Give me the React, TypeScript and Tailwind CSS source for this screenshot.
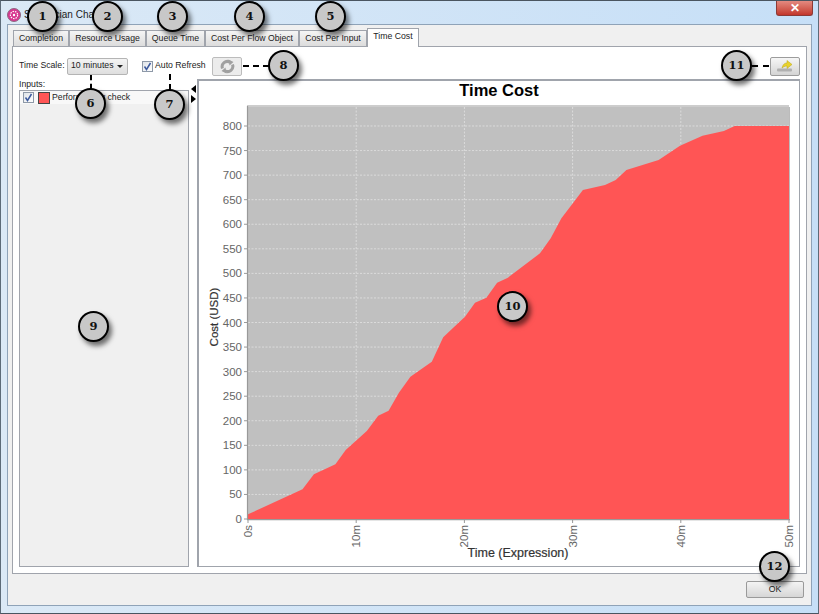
const tabs = [
  { label: "Completion", width: "w-[56px]" },
  { label: "Resource Usage", width: "w-[77px]" },
  { label: "Queue Time", width: "w-[59px]" },
  { label: "Cost Per Flow Object", width: "w-[94px]" },
  { label: "Cost Per Input", width: "w-[68px]" },
];

const area =
  "248,514.3 302.5,489.3 313.9,474.3 335.4,464.3 345.7,450 366.8,431 378.2,415.7 388.6,410.7 398.9,392.7 410.4,376.7 431.8,361.7 443.2,337.3 454.3,326.7 465,316.7 475,302.7 486.4,297.7 497.1,282.7 507.9,277.7 540,253.3 550.7,238.3 561.4,218.3 572.1,204.3 582.9,190 605,185 615.7,180 626.4,170 658.6,160 680,145.7 702.5,135.7 723.9,131 734.6,126 789,126 789,519 248,519";

const yTicks = Array.from({ length: 17 }, (_, i) => i * 50);
const xTicks = ["0s", "10m", "20m", "30m", "40m", "50m"];

const Badge = ({ n, className }: { n: number; className: string }) => (
  <div
    className={`absolute z-20 flex h-[31px] w-[31px] items-center justify-center rounded-full border-2 border-black bg-[#c8c8c8] text-[11.5px] font-bold text-[#111] shadow-[3px_4px_5px_rgba(0,0,0,0.55)] [font-family:'DejaVu_Serif',serif] ${className}`}
  >
    {n}
  </div>
);

const Dash = ({ className }: { className: string }) => (
  <div className={`absolute z-10 border-black ${className}`} />
);

const Check = () => (
  <span className="flex h-[11px] w-[11px] shrink-0 items-center justify-center border border-[#8e99a8] bg-gradient-to-br from-[#dfe3e8] to-white">
    <svg width="9" height="9" viewBox="0 0 9 9">
      <path d="M1.5 4.5 L3.5 7.5 L7.5 1" fill="none" stroke="#3d5a9e" strokeWidth="1.5" />
    </svg>
  </span>
);

const Chart = () => (
  <svg viewBox="199 102 600 464" className="block h-[464px] w-[600px]">
    <rect x="248" y="107" width="541" height="412" fill="#c0c0c0" />
    <polyline points="247,106 789,106" stroke="#9a9a9a" fill="none" />
    {yTicks.map((v) => {
      const y = 519 - (v * 393) / 800;
      return (
        <g key={v}>
          {v > 0 && (
            <line x1="248" x2="789" y1={y} y2={y} stroke="#e2e2e2" strokeWidth="0.8" strokeDasharray="2 1.5" />
          )}
          <line x1="244" x2="247" y1={y} y2={y} stroke="#999" />
          <text x="242" y={y + 4} textAnchor="end" fontSize="11.5" fill="#666" fontFamily="Liberation Sans">
            {v}
          </text>
        </g>
      );
    })}
    {xTicks.map((t, i) => {
      const x = 248 + i * 108.2;
      return (
        <g key={t}>
          {i > 0 && i < 5 && (
            <line x1={x} x2={x} y1="107" y2="519" stroke="#e2e2e2" strokeWidth="0.8" strokeDasharray="2 1.5" />
          )}
          <line x1={x} x2={x} y1="520" y2="523" stroke="#999" />
          <text
            transform={`translate(${x + 4} 525) rotate(-90)`}
            textAnchor="end"
            fontSize="11.5"
            fill="#666"
            fontFamily="Liberation Sans"
          >
            {t}
          </text>
        </g>
      );
    })}
    <polygon points={area} fill="#ff5555" />
    <line x1="247.5" x2="247.5" y1="106" y2="520" stroke="#999" strokeWidth="1.2" />
    <line x1="247" x2="790" y1="519.7" y2="519.7" stroke="#999" strokeWidth="1.2" />
    <line x1="789.5" x2="789.5" y1="107" y2="519" stroke="#bbb" />
    <text x="518" y="557" textAnchor="middle" fontSize="12.5" fill="#333" fontFamily="Liberation Sans" stroke="#333" strokeWidth="0.2">
      Time (Expression)
    </text>
    <text
      transform="translate(218 317) rotate(-90)"
      textAnchor="middle"
      fontSize="11.5"
      fill="#333"
      fontFamily="Liberation Sans"
      stroke="#333"
      strokeWidth="0.2"
    >
      Cost (USD)
    </text>
  </svg>
);

export default function App() {
  return (
    <div className="relative flex h-[614px] w-[819px] flex-col overflow-hidden border border-x-[#5d6b78] border-y-[#4a5560] bg-gradient-to-r from-[#dbe9f6] to-[#c6dff7] text-[8.7px] text-[#222] [font-family:'Liberation_Sans',sans-serif]">
      <div className="flex h-[23px] shrink-0 items-center pl-[6px] pt-[4px]">
        <svg width="14" height="14" viewBox="0 0 14 14">
          <circle cx="7" cy="7" r="6.5" fill="#d8368f" stroke="#8c6b82" />
          <circle cx="7" cy="7" r="3.6" fill="none" stroke="#fff" strokeWidth="1.2" strokeDasharray="1.5 1" />
          <circle cx="7" cy="7" r="1.2" fill="#fff" />
        </svg>
        <span className="ml-[3px] text-[10px] text-[#1c1c1c]">Simulacian Chart</span>
      </div>

      <div className="absolute right-[5px] top-0 flex h-[15px] w-[37px] items-center justify-center rounded-b-[3px] border border-t-0 border-[#8c3a36] bg-gradient-to-b from-[#e38a80] to-[#c2352b] text-[12px] font-bold leading-none text-white">
        ✕
      </div>

      <div className="mx-[6px] mb-[7px] flex flex-1 flex-col border border-[#8fa3b8] bg-[#f0f0f0] px-[4px]">
        <div className="flex h-[21px] shrink-0 items-end pl-[1px]">
          {tabs.map((t) => (
            <div
              key={t.label}
              className={`flex h-[16px] items-center justify-center border border-b-0 border-[#a0a4ac] bg-gradient-to-b from-[#f5f5f5] to-[#dcdcdc] whitespace-nowrap ${t.width}`}
            >
              {t.label}
            </div>
          ))}
          <div className="relative z-[1] -mb-[1px] flex h-[19px] w-[52px] items-center justify-center border border-b-0 border-[#a0a4ac] bg-white pb-[2px] whitespace-nowrap">
            Time Cost
          </div>
        </div>

        <div className="flex h-[528px] shrink-0 flex-col border border-[#a0a4ac] bg-white px-[6px]">
          <div className="flex h-[32px] shrink-0 items-center pt-[6px]">
            <span className="w-[48px] whitespace-nowrap">Time Scale:</span>
            <div className="flex h-[17px] w-[61px] items-center justify-between rounded-[2px] border border-[#b4b4b4] bg-gradient-to-b from-[#f4f4f4] to-[#dedede] pl-[3px] pr-[4px]">
              <span className="whitespace-nowrap">10 minutes</span>
              <span className="h-0 w-0 border-x-[3px] border-t-[3px] border-x-transparent border-t-[#222]" />
            </div>
            <div className="ml-[14px]">
              <Check />
            </div>
            <span className="ml-[2px] w-[51px] whitespace-nowrap">Auto Refresh</span>
            <div className="ml-[6px] flex h-[19px] w-[30px] items-center justify-center rounded-[2px] border border-[#bcbcbc] bg-[#ececec]">
              <svg width="15" height="15" viewBox="0 0 15 15" fill="none" stroke="#a0a0a0" strokeWidth="3">
                <path d="M2.5 9.5 A5.2 5.2 0 0 1 10 3.2" />
                <path d="M12.5 5.5 A5.2 5.2 0 0 1 5 11.8" />
                <path d="M8.5 0.5 L13.5 3 L9.5 6.5 Z" fill="#a0a0a0" stroke="none" />
                <path d="M6.5 14.5 L1.5 12 L5.5 8.5 Z" fill="#a0a0a0" stroke="none" />
              </svg>
            </div>
            <div className="ml-auto flex h-[19px] w-[30px] items-center justify-center rounded-[2px] border border-[#9c9c9c] bg-gradient-to-b from-[#f6f6f6] to-[#d4d4d4]">
              <svg width="20" height="14" viewBox="0 0 20 14">
                <rect x="2" y="9.5" width="15" height="3" rx="1" fill="#b0b0b0" />
                <path d="M7 9 C8 5 10 4 12 4 L12 1.5 L17 5.5 L12 9.5 L12 7 C10.5 7 9 7.5 7 9 Z" fill="#e8d22c" stroke="#b9a51a" strokeWidth="0.5" />
              </svg>
            </div>
          </div>

          <div className="flex flex-1 pb-[6px]">
            <div className="flex w-[170px] shrink-0 flex-col">
              <div className="h-[11px] leading-[11px]">Inputs:</div>
              <div className="flex-1 border border-[#a0a4ac] bg-[#f0f0f0]">
                <div className="flex h-[13px] items-center bg-[#f8f8f8] pl-[3px]">
                  <Check />
                  <span className="ml-[4px] h-[12px] w-[12px] border border-[#444] bg-[#ff5555]" />
                  <span className="ml-[2px]">Perform Body check</span>
                </div>
              </div>
            </div>
            <div className="flex w-[8px] shrink-0 flex-col items-center gap-[2px] pt-[6px]">
              <span className="h-0 w-0 border-y-[4px] border-r-[5px] border-y-transparent border-r-black" />
              <span className="h-0 w-0 border-y-[4px] border-l-[5px] border-y-transparent border-l-black" />
            </div>
            <div className="flex-1 border border-l-2 border-t-2 border-[#a0a4ac] bg-white">
              <div className="h-[21px] text-center text-[16.5px] font-bold leading-[18px] text-black">
                Time Cost
              </div>
              <Chart />
            </div>
          </div>
        </div>

        <div className="flex flex-1 items-center justify-end pr-[3px]">
          <div className="flex h-[17px] w-[58px] items-center justify-center rounded-[2px] border border-[#9a9a9a] bg-gradient-to-b from-[#f4f4f4] to-[#d6d6d6]">
            OK
          </div>
        </div>
      </div>

      <Badge n={1} className="left-[26px] top-0" />
      <Badge n={2} className="left-[91px] top-0" />
      <Badge n={3} className="left-[156px] top-0" />
      <Badge n={4} className="left-[233px] top-0" />
      <Badge n={5} className="left-[314px] top-0" />
      <Badge n={6} className="left-[74px] top-[87px]" />
      <Badge n={7} className="left-[153px] top-[88px]" />
      <Badge n={8} className="left-[267px] top-[49px]" />
      <Badge n={9} className="left-[77px] top-[310px]" />
      <Badge n={10} className="left-[496px] top-[290px]" />
      <Badge n={11} className="left-[720px] top-[49px]" />
      <Badge n={12} className="left-[758px] top-[550px]" />

      <Dash className="left-[89px] top-[74px] h-[14px] border-l-2 border-dashed" />
      <Dash className="left-[168px] top-[73px] h-[16px] border-l-2 border-dashed" />
      <Dash className="left-[242px] top-[64px] w-[26px] border-t-2 border-dashed" />
      <Dash className="left-[751px] top-[64px] w-[17px] border-t-2 border-dashed" />
    </div>
  );
}
